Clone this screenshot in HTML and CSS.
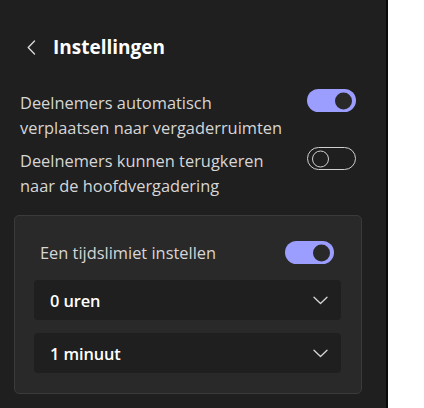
FILE: index.html
```html
<!DOCTYPE html>
<html lang="nl">
<head>
<meta charset="utf-8">
<title>Instellingen</title>
<link rel="stylesheet" href="styles.css">
</head>
<body>
<div class="panel">
  <div class="header">
    <button class="back" aria-label="Terug">
      <svg width="9" height="15" viewBox="0 0 9 15"><path d="M7.5 1 L1.2 7.5 L7.5 14" fill="none" stroke="#d6d6d6" stroke-width="1.4" stroke-linecap="round" stroke-linejoin="round"/></svg>
    </button>
    <h1 class="title">Instellingen</h1>
  </div>

  <div class="option first">
    <div class="label">Deelnemers automatisch<br>verplaatsen naar vergaderruimten</div>
    <span class="toggle on"><span class="knob"></span></span>
  </div>
  <div class="option">
    <div class="label">Deelnemers kunnen terugkeren<br>naar de hoofdvergadering</div>
    <span class="toggle off"><span class="knob"></span></span>
  </div>

  <div class="card">
    <div class="card-row">
      <div class="label">Een tijdslimiet instellen</div>
      <span class="toggle on"><span class="knob"></span></span>
    </div>
    <div class="select">
      <span class="value">0 uren</span>
      <svg width="15" height="9" viewBox="0 0 15 9"><path d="M1 1.2 L7.5 7.5 L14 1.2" fill="none" stroke="#d6d6d6" stroke-width="1.3" stroke-linecap="round" stroke-linejoin="round"/></svg>
    </div>
    <div class="select">
      <span class="value">1 minuut</span>
      <svg width="15" height="9" viewBox="0 0 15 9"><path d="M1 1.2 L7.5 7.5 L14 1.2" fill="none" stroke="#d6d6d6" stroke-width="1.3" stroke-linecap="round" stroke-linejoin="round"/></svg>
    </div>
  </div>
</div>
</body>
</html>
```

FILE: styles.css
```css
* { box-sizing: border-box; }
html, body { margin: 0; padding: 0; background: #ffffff; }
body { font-family: "Open Sans", "Noto Sans", sans-serif; }

.panel {
  width: 388px;
  height: 408px;
  background: #1f1f1f;
  border-right: 2px solid #0b0b0b;
  padding: 33px 24px 0 14px;
}

.header {
  display: flex;
  align-items: center;
  height: 28px;
  padding-left: 13px;
}
.back {
  background: none;
  border: 0;
  padding: 0;
  width: 26px;
  height: 28px;
  display: flex;
  align-items: center;
}
.title {
  margin: 0;
  font-size: 19px;
  font-weight: 700;
  color: #ffffff;
  line-height: 28px;
}

.option {
  display: flex;
  justify-content: space-between;
  align-items: flex-start;
  padding: 0 6px;
  margin-top: 8px;
}
.option.first { margin-top: 29px; }

.label {
  color: #d6d6d6;
  font-size: 16.4px;
  line-height: 25px;
  letter-spacing: 0;
}

.toggle {
  position: relative;
  flex: none;
  width: 49px;
  height: 23px;
  border-radius: 12px;
  margin-top: -1px;
}
.toggle.on { background: #9b9eff; }
.toggle.off { border: 1px solid #d0d0d0; }
.toggle .knob {
  position: absolute;
  top: 50%;
  width: 17px;
  height: 17px;
  border-radius: 50%;
  transform: translateY(-50%);
}
.toggle.on .knob { right: 4px; background: #292929; }
.toggle.off .knob { left: 4px; border: 1px solid #d0d0d0; }

.card {
  margin-top: 17px;
  background: #292929;
  border: 1px solid #3a3a3a;
  border-radius: 5px;
  padding: 24px 20px 20px 19px;
}
.card-row {
  display: flex;
  justify-content: space-between;
  align-items: center;
  height: 25px;
  padding: 0 7px 0 6px;
}
.card-row .toggle { margin-top: 0; }

.select {
  display: flex;
  justify-content: space-between;
  align-items: center;
  height: 40px;
  background: #1f1f1f;
  border-radius: 4px;
  padding: 0 13px 0 16px;
  margin-top: 13px;
}
.card-row + .select { margin-top: 15px; }
.select .value {
  color: #ffffff;
  font-size: 16.4px;
  font-weight: 600;
  letter-spacing: -0.1px;
}
```
